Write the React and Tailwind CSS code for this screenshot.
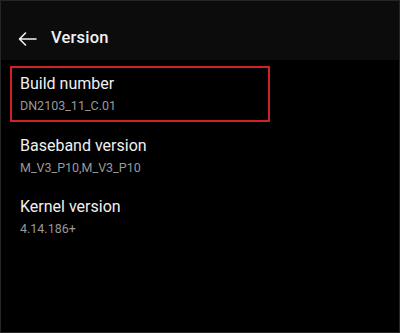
import React from "react";

export default function App() {
  return (
    <div
      className="w-[400px] h-[333px] bg-black border border-[#262626] flex flex-col overflow-hidden"
      style={{ fontFamily: "Roboto, 'Noto Sans', sans-serif" }}
    >
      <div className="h-[59px] bg-[#0c0c0c] flex items-center pl-[16px] pt-[16px]">
        <svg width="20" height="16" viewBox="0 0 20 16" className="mr-[14px]">
          <path d="M19 8H2.5M8.5 2L2.5 8l6 6" stroke="#f2f2f2" strokeWidth="1.6" fill="none" strokeLinecap="round" strokeLinejoin="round" />
        </svg>
        <span className="text-[16.5px] font-medium text-[#f2f2f2] tracking-[0.2px]">Version</span>
      </div>
      <div className="flex flex-col pl-[9px] pt-[6px]">
        <div className="w-[260px] h-[56px] border-2 border-[#d0202a] pl-[8px] flex flex-col pt-[6px]">
          <span className="text-[16px] leading-[20px] text-[#f0f0f0]">Build number</span>
          <span className="text-[12.5px] leading-[16px] mt-[4px] text-[#999999]">DN2103_11_C.01</span>
        </div>
        <div className="pl-[10px] flex flex-col pt-[14px]">
          <span className="text-[16px] leading-[20px] text-[#f0f0f0]">Baseband version</span>
          <span className="text-[12.5px] leading-[16px] mt-[4px] text-[#999999]">M_V3_P10,M_V3_P10</span>
        </div>
        <div className="pl-[10px] flex flex-col pt-[21px]">
          <span className="text-[16px] leading-[20px] text-[#f0f0f0]">Kernel version</span>
          <span className="text-[12.5px] leading-[16px] mt-[4px] text-[#999999]">4.14.186+</span>
        </div>
      </div>
    </div>
  );
}
